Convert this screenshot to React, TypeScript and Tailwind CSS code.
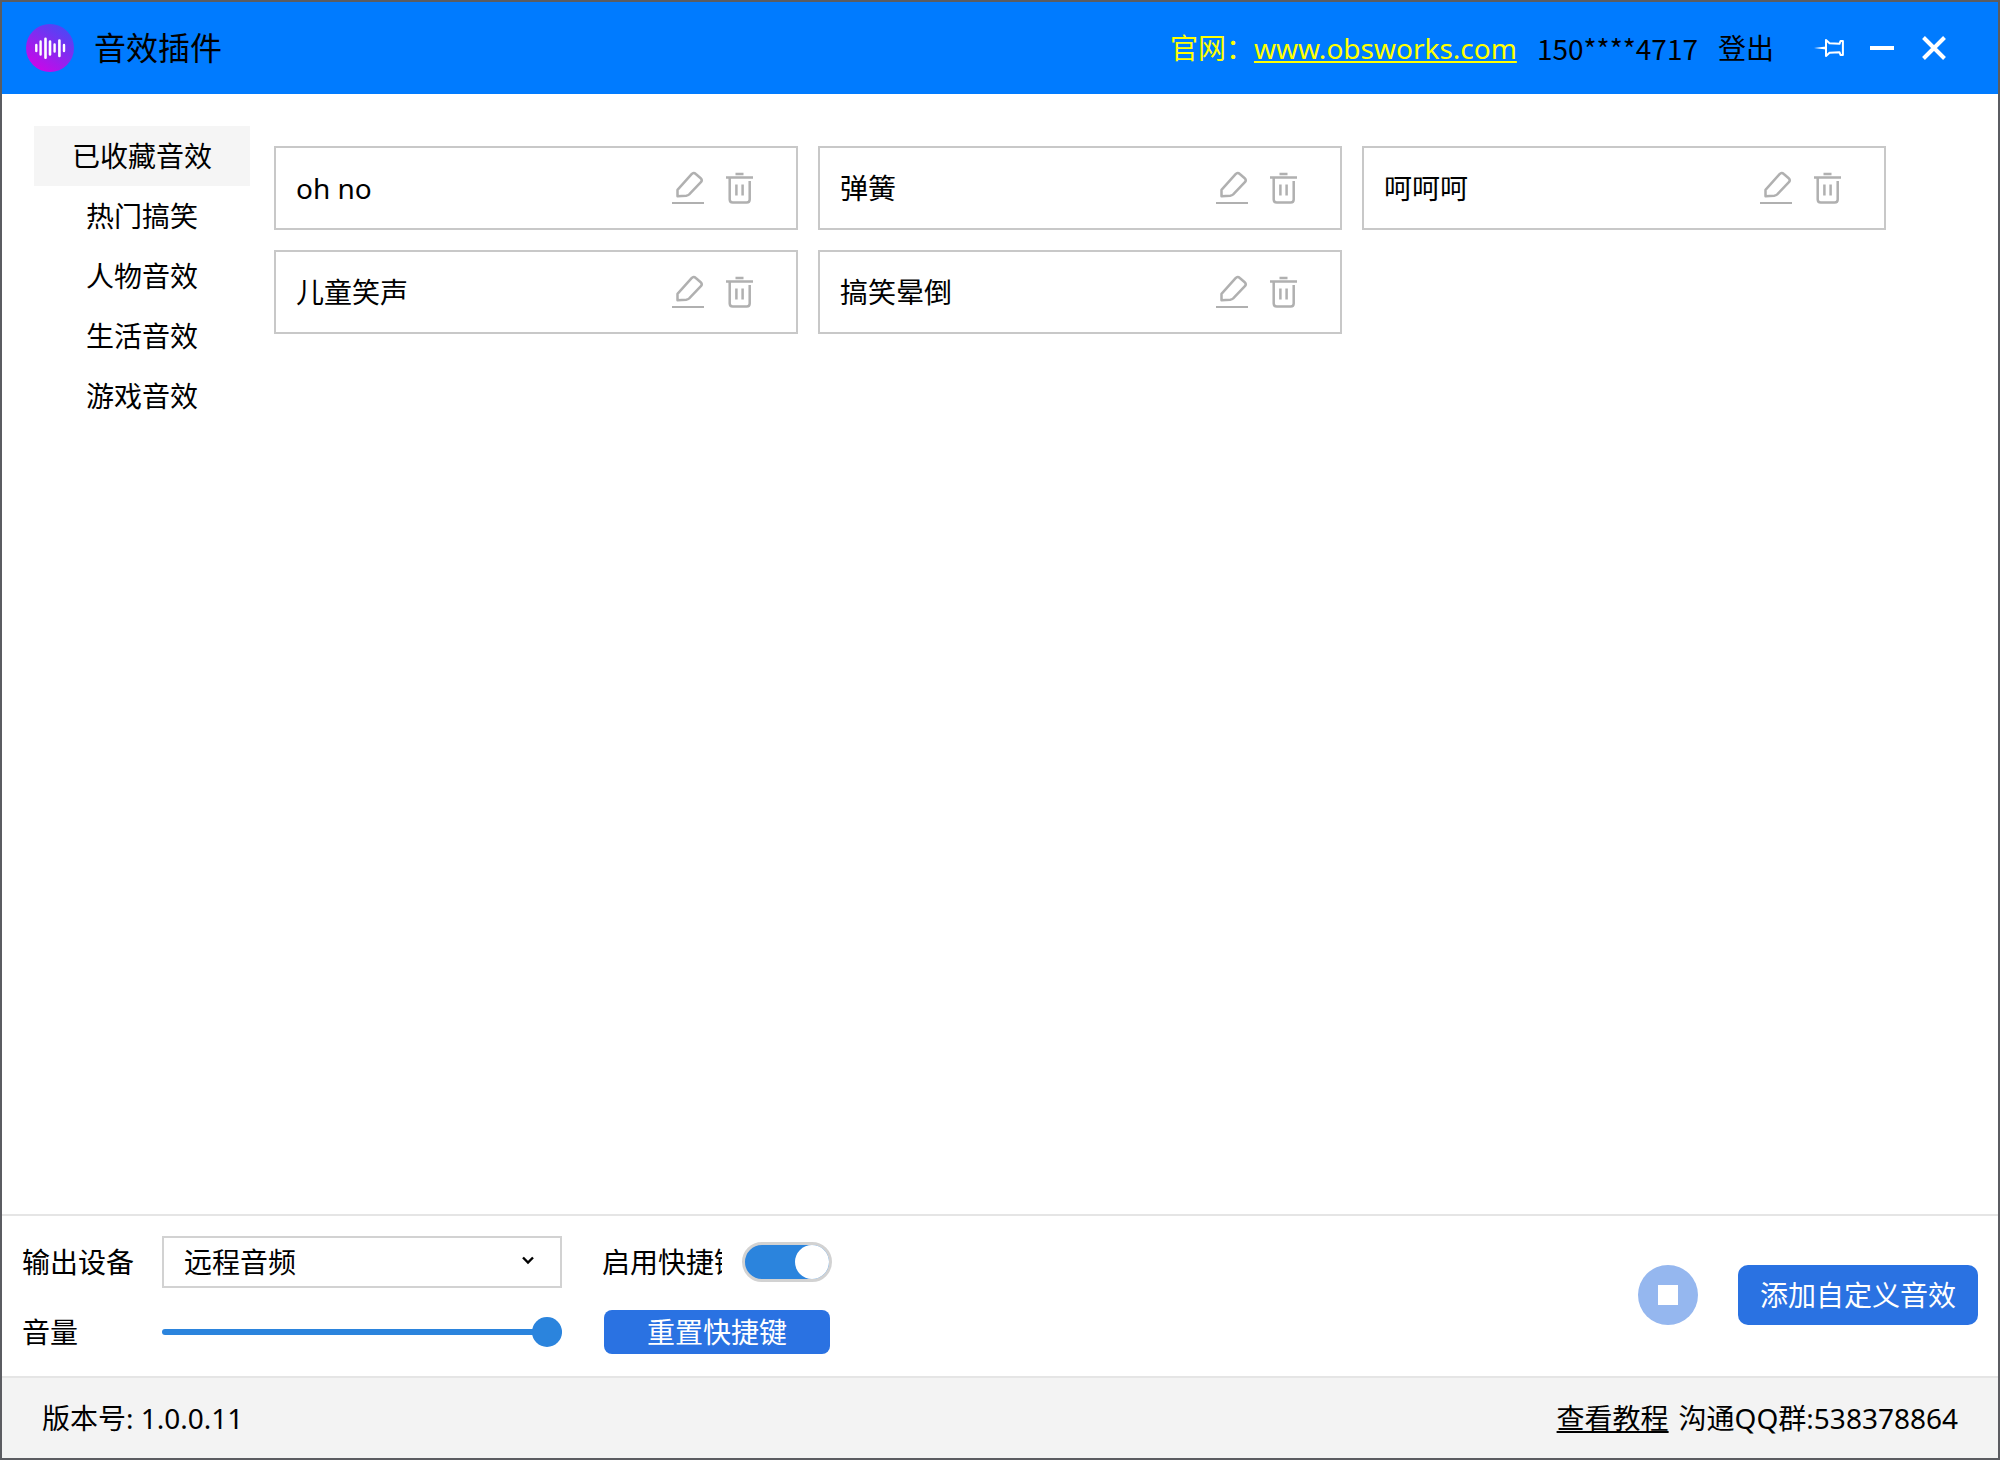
import React, { useState } from 'react';

interface Sound {
  id: number;
  name: string;
}

const categories = ['已收藏音效', '热门搞笑', '人物音效', '生活音效', '游戏音效'];

const sounds: Sound[] = [
  { id: 1, name: 'oh no' },
  { id: 2, name: '弹簧' },
  { id: 3, name: '呵呵呵' },
  { id: 4, name: '儿童笑声' },
  { id: 5, name: '搞笑晕倒' },
];

const LogoIcon = () => (
  <svg viewBox="0 0 48 48" className="w-12 h-12" aria-hidden="true">
    <defs>
      <linearGradient id="logo" x1="0.2" y1="0.95" x2="0.8" y2="0.05">
        <stop offset="0" stopColor="#cc06e8" />
        <stop offset="1" stopColor="#4a48f6" />
      </linearGradient>
    </defs>
    <circle cx="24" cy="24" r="24" fill="url(#logo)" />
    <g stroke="#fff" strokeLinecap="round" strokeWidth="2.4">
      <path d="M10.3 21v6M38 21v6" />
      <path d="M14.6 17.5v13M28.6 20.5v7" />
      <path d="M19.5 14.7v19M24 17.5v13" strokeWidth="2.6" />
      <path d="M33.4 16.5v15.5" strokeWidth="2.6" />
    </g>
  </svg>
);

const PinIcon = () => (
  <svg viewBox="0 0 30 20" className="w-[30px] h-5" fill="none" stroke="#fff" strokeWidth="2" strokeLinejoin="round" aria-hidden="true">
    <path d="M12 2v16l3.5-3.2 10-.6 1 2.8h2.4V3h-2.4l-1 2.8-10-.6z" />
    <path d="M0 10l12-1.6v3.2z" fill="#fff" stroke="none" />
  </svg>
);

const EditIcon = () => (
  <svg viewBox="0 0 32 36" className="w-8 h-9" fill="none" stroke="#b0b0b0" strokeWidth="2.5" strokeLinejoin="round" aria-hidden="true">
    <path d="M5.5 26.2V19.8L19.6 4.2Q21.6 2 23.8 4L28.7 8.2Q30.7 10 28.9 12.2L17.2 24.4Q16 25.5 14.2 25.7z" />
    <path d="M0 33h32" strokeWidth="2" />
  </svg>
);

const TrashIcon = () => (
  <svg viewBox="0 0 27 36" className="w-[27px] h-9" fill="none" stroke="#b0b0b0" strokeWidth="2.5" aria-hidden="true">
    <path d="M9.5 4h8M0 7.5h27" />
    <path d="M3.7 8v21.6q0 3 3 3h14q3 0 3-3V11" />
    <path d="M10.4 14.5v11M16.6 14.5v11" />
  </svg>
);

const SoundCard = ({ sound }: { sound: Sound }) => (
  <div className="flex items-center h-[84px] pl-5 pr-[43px] border-2 border-[#c8c8c8]">
    <span className="grow truncate">{sound.name}</span>
    <div className="flex gap-[22px]">
      <button type="button" aria-label={`编辑 ${sound.name}`}>
        <EditIcon />
      </button>
      <button type="button" aria-label={`删除 ${sound.name}`}>
        <TrashIcon />
      </button>
    </div>
  </div>
);

const TitleBar = () => (
  <header className="flex items-center h-[92px] pl-6 pr-[52px] bg-[#007bff]">
    <LogoIcon />
    <h1 className="ml-5 text-[32px] grow">音效插件</h1>
    <span className="text-[#ffff00]">官网：</span>
    <a href="#site" className="text-[#ffff00] underline underline-offset-2 decoration-2">www.obsworks.com</a>
    <span className="ml-5 font-['Noto_Sans_CJK_SC',sans-serif]">150****4717</span>
    <button type="button" className="ml-5">登出</button>
    <button type="button" aria-label="置顶" className="ml-10">
      <PinIcon />
    </button>
    <button type="button" aria-label="最小化" className="ml-[26px]">
      <svg viewBox="0 0 24 24" className="w-6 h-6" stroke="#fff" strokeWidth="4" aria-hidden="true">
        <path d="M0 12h24" />
      </svg>
    </button>
    <button type="button" aria-label="关闭" className="ml-7">
      <svg viewBox="0 0 24 24" className="w-6 h-6" stroke="#fff" strokeWidth="4" aria-hidden="true">
        <path d="M1.5 1.5l21 21M22.5 1.5l-21 21" />
      </svg>
    </button>
  </header>
);

const ControlPanel = () => {
  const [volume, setVolume] = useState(100);
  const [hotkeys, setHotkeys] = useState(true);

  return (
    <section className="flex items-center justify-between px-5 pt-5 pb-[22px] border-t-2 border-[#e5e5e5]">
      <div className="grid grid-cols-[140px_400px_230px] items-center gap-y-[22px]">
        <label htmlFor="device">输出设备</label>
        <div className="relative">
          <select id="device" className="appearance-none w-full h-[52px] pl-5 pr-12 border-2 border-[#d2d2d2] bg-white">
            <option>远程音频</option>
          </select>
          <svg viewBox="0 0 12 10" className="absolute right-7 top-5 w-3 h-2.5 pointer-events-none" fill="none" stroke="#000" strokeWidth="2.4" aria-hidden="true">
            <path d="M1 1.5l5 5 5-5" />
          </svg>
        </div>
        <div className="flex items-center gap-5 pl-10">
          <label htmlFor="hotkeys" className="w-[120px] shrink-0 overflow-hidden whitespace-nowrap">启用快捷键</label>
          <input
            id="hotkeys"
            type="checkbox"
            role="switch"
            checked={hotkeys}
            onChange={(e) => setHotkeys(e.target.checked)}
            className="appearance-none flex shrink-0 w-[90px] h-10 rounded-full border-3 border-[#d2d2d2] bg-white checked:bg-[#2b84dd] checked:justify-end before:block before:w-[34px] before:h-[34px] before:rounded-full before:bg-white"
          />
        </div>

        <label htmlFor="volume">音量</label>
        <input
          id="volume"
          type="range"
          min={0}
          max={100}
          value={volume}
          onChange={(e) => setVolume(Number(e.target.value))}
          className="appearance-none w-full h-[30px] bg-transparent [&::-webkit-slider-runnable-track]:h-1.5 [&::-webkit-slider-runnable-track]:rounded-full [&::-webkit-slider-runnable-track]:bg-[#2b84dd] [&::-webkit-slider-thumb]:appearance-none [&::-webkit-slider-thumb]:w-[30px] [&::-webkit-slider-thumb]:h-[30px] [&::-webkit-slider-thumb]:-mt-3 [&::-webkit-slider-thumb]:rounded-full [&::-webkit-slider-thumb]:bg-[#2b84dd]"
        />
        <button type="button" className="ml-[42px] w-[226px] h-11 rounded-lg bg-[#2a72e2] text-white">重置快捷键</button>
      </div>

      <div className="flex items-center gap-10">
        <button type="button" aria-label="停止" className="flex items-center justify-center w-15 h-15 rounded-full bg-[#95b7ef]">
          <span className="w-5 h-5 bg-white" />
        </button>
        <button type="button" className="w-60 h-15 rounded-[10px] bg-[#2a72e2] text-white">添加自定义音效</button>
      </div>
    </section>
  );
};

const App = () => {
  const [active, setActive] = useState(categories[0]);

  return (
    <div className="flex flex-col min-h-screen border-2 border-[#5b5c61] bg-white text-black text-[28px] leading-10 font-['Noto_Sans','Noto_Sans_CJK_SC',sans-serif]">
      <TitleBar />

      <main className="flex grow items-start pl-8 pr-28">
        <nav className="flex flex-col w-[216px] shrink-0 mt-8">
          {categories.map((name) => (
            <button
              key={name}
              type="button"
              onClick={() => setActive(name)}
              className={`h-15 ${active === name ? 'bg-[#f5f5f5]' : ''}`}
            >
              {name}
            </button>
          ))}
        </nav>
        <div className="grid grid-cols-3 gap-5 grow ml-6 mt-[52px]">
          {sounds.map((sound) => (
            <SoundCard key={sound.id} sound={sound} />
          ))}
        </div>
      </main>

      <ControlPanel />

      <footer className="flex items-center justify-between h-[82px] px-10 border-t-2 border-[#e5e5e5] bg-[#f3f3f3]">
        <span>版本号: 1.0.0.11</span>
        <div className="flex gap-2.5">
          <a href="#guide" className="underline underline-offset-2 decoration-2">查看教程</a>
          <span>沟通QQ群:538378864</span>
        </div>
      </footer>
    </div>
  );
};

export default App;
